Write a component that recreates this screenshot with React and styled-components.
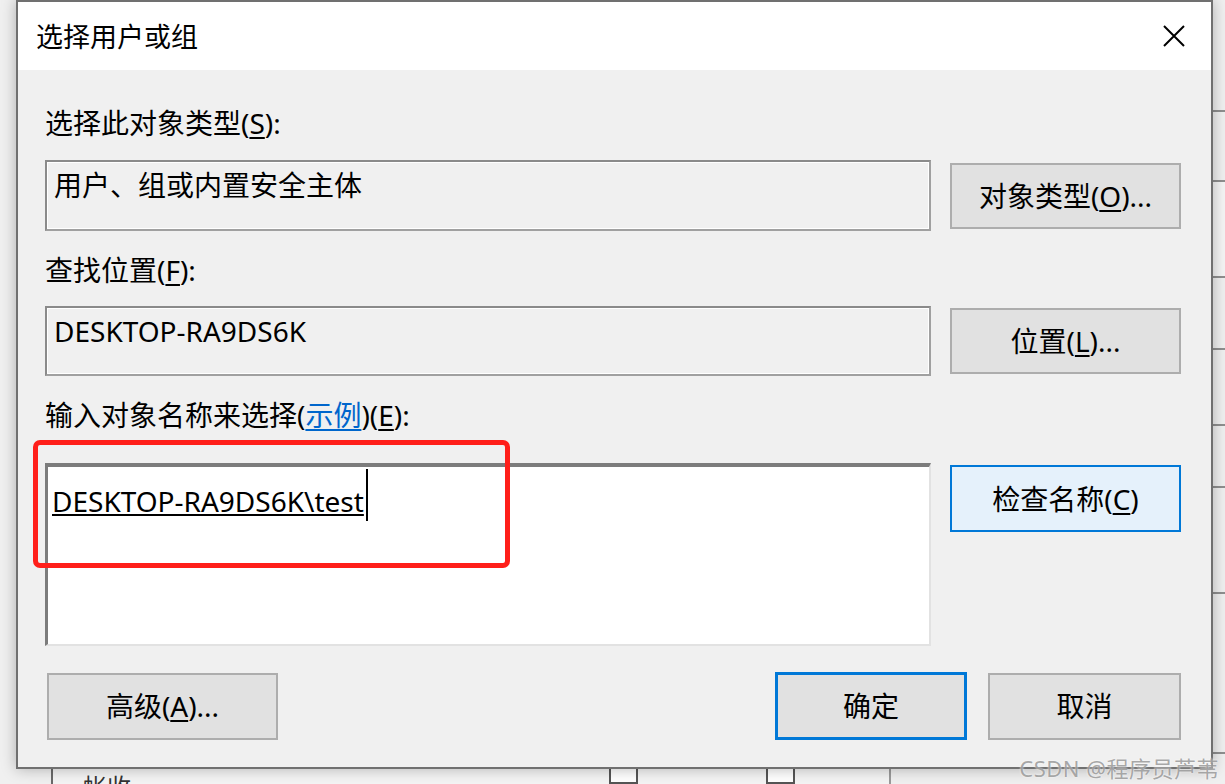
import styled, { createGlobalStyle } from 'styled-components';

const GlobalStyle = createGlobalStyle`
  html, body {
    margin: 0;
    padding: 0;
    overflow: hidden;
    background: #f0f0f0;
  }
  * {
    box-sizing: border-box;
  }
`;

const FONT = `"Noto Sans", "Noto Sans CJK SC", sans-serif`;

const Desktop = styled.div`
  position: relative;
  width: 1225px;
  height: 784px;
  overflow: hidden;
  background: #f0f0f0;
  font-family: ${FONT};
`;

// window behind the dialog, only its edges show
const BackWindow = styled.div`
  position: absolute;
  left: 0;
  top: 0;
  width: 1225px;
  height: 784px;
  background: #f0f0f0;
`;

const EdgeLines = styled.div`
  position: absolute;
  left: 1212px;
  top: 0;
  width: 13px;
  height: 784px;
  display: flex;
  flex-direction: column;
`;

const EdgeCell = styled.div`
  height: ${(props) => props.h}px;
  border-bottom: 2px solid #8f8f8f;
  background: ${(props) => props.bg || '#f0f0f0'};
`;

const BackList = styled.div`
  position: absolute;
  left: 51px;
  top: 752px;
  width: 840px;
  height: 40px;
  border-left: 2px solid #6a6a6a;
  border-right: 2px solid #9a9a9a;
  background: #f4f4f4;
  display: flex;
  align-items: flex-end;
`;

const BackText = styled.span`
  margin-left: 30px;
  font-size: 24px;
  color: #333;
  line-height: 30px;
  margin-bottom: -10px;
`;

const BackCheck = styled.span`
  position: absolute;
  left: ${(props) => props.x}px;
  top: 8px;
  width: 29px;
  height: 24px;
  border: 2px solid #555;
  background: #fff;
`;

const Dialog = styled.div`
  position: absolute;
  left: 16px;
  top: 0;
  width: 1197px;
  height: 769px;
  border: 2px solid #707070;
  background: #f0f0f0;
  box-shadow: 0 0 14px rgba(0, 0, 0, 0.28);
  display: flex;
  flex-direction: column;
`;

const TitleBar = styled.div`
  height: 68px;
  flex-shrink: 0;
  background: #fff;
  display: flex;
  align-items: center;
  justify-content: space-between;
  padding: 0 26px 0 18px;
`;

const Title = styled.div`
  font-family: ${FONT};
  font-size: 27px;
  color: #000;
  line-height: 1;
`;

const Close = styled.div`
  width: 22px;
  height: 22px;
  display: flex;
`;

const Body = styled.div`
  position: relative;
  flex: 1;
  padding: 0 30px 0 27px;
  display: flex;
  flex-direction: column;
`;

const Label = styled.div`
  font-size: 28px;
  line-height: 34px;
  color: #000;
  margin-top: ${(props) => props.mt}px;
`;

const U = styled.span`
  text-decoration: underline;
  text-underline-offset: 3px;
`;

const Link = styled.span`
  color: #0066cc;
  text-decoration: underline;
  text-underline-offset: 3px;
`;

const FieldRow = styled.div`
  display: grid;
  grid-template-columns: 886px 231px;
  column-gap: 19px;
  align-items: ${(props) => props.align || 'center'};
  margin-top: ${(props) => props.mt}px;
`;

const ReadBox = styled.div`
  height: ${(props) => props.h}px;
  border: 2px solid #a0a0a0;
  border-top-color: #8a8a8a;
  border-left-color: #8a8a8a;
  box-shadow: inset 1px 1px 0 #fff, inset -1px -1px 0 #fff;
  background: #f0f0f0;
  padding: 7px 7px;
  font-size: 28px;
  line-height: 32px;
  color: #000;
`;

const InputBox = styled.div`
  height: 183px;
  background: #fff;
  border-top: 4px solid #7c7c7c;
  border-left: 3px solid #7c7c7c;
  border-right: 2px solid #e2e2e2;
  border-bottom: 2px solid #e2e2e2;
  padding: 2px 4px 0;
  font-size: 28px;
  line-height: 40px;
  color: #000;
`;

const Entered = styled.span`
  text-decoration: underline;
  text-decoration-thickness: 2px;
  text-underline-offset: 2px;
`;

const Caret = styled.span`
  display: inline-block;
  width: 2px;
  height: 52px;
  background: #000;
  vertical-align: -9px;
  margin-left: 2px;
`;

const Button = styled.div`
  height: ${(props) => props.h || 66}px;
  width: ${(props) => props.w || 231}px;
  margin-top: ${(props) => props.mt || 0}px;
  background: ${(props) => (props.hot ? '#e5f1fb' : '#e1e1e1')};
  border: ${(props) => (props.primary ? '3px solid #0078d7' : props.hot ? '2px solid #0078d7' : '2px solid #adadad')};
  display: flex;
  align-items: center;
  justify-content: center;
  font-size: 28px;
  color: #000;
  line-height: 1;
`;

const Footer = styled.div`
  display: flex;
  align-items: center;
  margin-top: 26px;
  padding-left: 2px;
`;

const Spacer = styled.div`
  flex: 1;
`;

const FooterGap = styled.div`
  width: 21px;
`;

const Annotation = styled.div`
  position: absolute;
  left: 15px;
  top: 370px;
  width: 477px;
  height: 128px;
  border: 5px solid #ff1f1a;
  border-radius: 7px;
  pointer-events: none;
`;

const Watermark = styled.div`
  position: absolute;
  right: 6px;
  bottom: 5px;
  font-family: ${FONT};
  font-size: 22px;
  letter-spacing: 0.5px;
  color: rgba(140, 140, 140, 0.75);
  text-shadow: 0 0 2px rgba(255, 255, 255, 0.9);
  line-height: 1;
`;

function App() {
  return (
    <Desktop>
      <GlobalStyle />
      <BackWindow>
        <EdgeLines>
          <EdgeCell h={112} />
          <EdgeCell h={70} />
          <EdgeCell h={96} bg="#f5f5f5" />
          <EdgeCell h={72} />
          <EdgeCell h={76} />
          <EdgeCell h={62} />
          <EdgeCell h={106} />
          <EdgeCell h={160} />
        </EdgeLines>
        <BackList>
          <BackText>帐收</BackText>
          <BackCheck x={556} />
          <BackCheck x={713} />
        </BackList>
      </BackWindow>

      <Dialog>
        <TitleBar>
          <Title>选择用户或组</Title>
          <Close>
            <svg width="22" height="22" viewBox="0 0 22 22">
              <path d="M1 1 L21 21 M21 1 L1 21" stroke="#000" strokeWidth="2" fill="none" />
            </svg>
          </Close>
        </TitleBar>

        <Body>
          <Label mt={36}>
            选择此对象类型(<U>S</U>):
          </Label>
          <FieldRow mt={20}>
            <ReadBox h={71}>用户、组或内置安全主体</ReadBox>
            <Button>
              对象类型(<U>O</U>)...
            </Button>
          </FieldRow>

          <Label mt={22}>
            查找位置(<U>F</U>):
          </Label>
          <FieldRow mt={19}>
            <ReadBox h={70}>DESKTOP-RA9DS6K</ReadBox>
            <Button>
              位置(<U>L</U>)...
            </Button>
          </FieldRow>

          <Label mt={22}>
            输入对象名称来选择(<Link>示例</Link>)(<U>E</U>):
          </Label>
          <FieldRow mt={31} align="start">
            <InputBox>
              <Entered>DESKTOP-RA9DS6K\test</Entered>
              <Caret />
            </InputBox>
            <Button hot mt={2} h={67}>
              检查名称(<U>C</U>)
            </Button>
          </FieldRow>

          <Footer>
            <Button h={67}>
              高级(<U>A</U>)...
            </Button>
            <Spacer />
            <Button primary w={192} h={68}>
              确定
            </Button>
            <FooterGap />
            <Button w={193} h={67}>
              取消
            </Button>
          </Footer>

          <Annotation />
        </Body>
      </Dialog>

      <Watermark>CSDN @程序员芦苇</Watermark>
    </Desktop>
  );
}

export default App;
